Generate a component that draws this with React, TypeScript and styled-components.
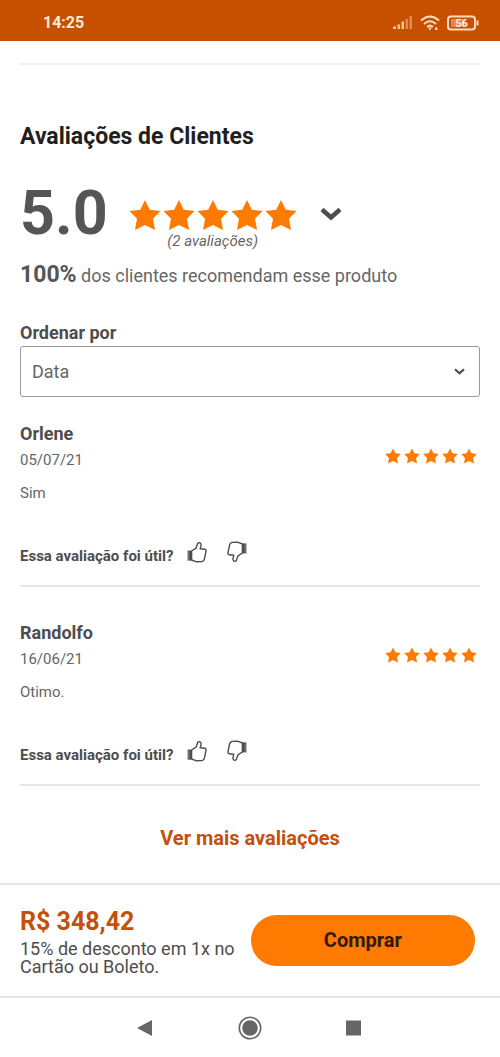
import React from "react";
import styled, { createGlobalStyle } from "styled-components";

const color = {
  brand: "#ff7a00",
  brandDark: "#c75000",
  price: "#c4500c",
  ink: "#1f1f1f",
  text: "#4d4d4d",
  muted: "#666666",
  line: "#e6e6e6",
};

const GlobalStyle = createGlobalStyle`
  *, *::before, *::after { box-sizing: border-box; }
  body {
    margin: 0;
    background: #fff;
    color: ${color.text};
    font-family: Roboto, "Liberation Sans", sans-serif;
  }
  h1, h2, h3, p { margin: 0; }
  button, select { font-family: inherit; }
  svg { display: block; flex: none; }
`;

const Screen = styled.div`
  min-height: 100vh;
  display: flex;
  flex-direction: column;
`;

const StatusBar = styled.header`
  display: flex;
  align-items: center;
  justify-content: space-between;
  height: 41px;
  padding: 4px 20px 0 43px;
  background: ${color.brandDark};
  color: #ffe9d6;
`;

const Clock = styled.time`
  font-size: 16px;
  line-height: 20px;
  font-weight: 700;
`;

const StatusIcons = styled.div`
  display: flex;
  align-items: center;
  gap: 7px;
`;

const Main = styled.main`
  flex: 1;
  padding: 22px 20px 32px;
`;

const Divider = styled.hr`
  height: 2px;
  margin: 0;
  border: 0;
  background: #efefef;
`;

const Title = styled.h1`
  margin-top: 58px;
  font-size: 23px;
  line-height: 28px;
  font-weight: 700;
  color: ${color.ink};
`;

const Summary = styled.section`
  display: flex;
  align-items: flex-start;
  margin-top: 32px;
`;

const Score = styled.strong`
  font-size: 61px;
  line-height: 60px;
  font-weight: 700;
  color: #555;
`;

const SummaryRating = styled.div`
  display: flex;
  flex-direction: column;
  align-items: center;
  gap: 1px;
  margin-left: 21px;
  padding-top: 16px;
`;

const Count = styled.span`
  font-size: 15px;
  line-height: 18px;
  font-style: italic;
  color: ${color.muted};
`;

const StarRow = styled.div<{ $gap: number }>`
  display: flex;
  gap: ${(p) => p.$gap}px;
`;

const IconButton = styled.button`
  display: flex;
  align-items: center;
  justify-content: center;
  padding: 0;
  border: 0;
  background: none;
  color: ${color.text};
  cursor: pointer;
`;

const ExpandButton = styled(IconButton)`
  height: 62px;
  margin-left: 23px;
`;

const Recommend = styled.p`
  margin-top: 12px;
  font-size: 18px;
  line-height: 26px;
  color: ${color.muted};

  strong {
    font-size: 23px;
    color: #555;
  }
`;

const SortLabel = styled.label`
  display: block;
  margin-top: 34px;
  font-size: 18px;
  line-height: 20px;
  font-weight: 700;
`;

const SelectBox = styled.div`
  position: relative;
  margin-top: 3px;

  svg {
    position: absolute;
    right: 15px;
    top: 22px;
    pointer-events: none;
  }
`;

const Select = styled.select`
  display: block;
  width: 100%;
  height: 51px;
  padding: 0 11px;
  border: 1px solid #999;
  border-radius: 3px;
  background: #fff;
  appearance: none;
  font-size: 18px;
  color: ${color.muted};
`;

const Review = styled.article<{ $first?: boolean }>`
  padding: ${(p) => (p.$first ? 26 : 35)}px 0 19px;
  border-bottom: 2px solid ${color.line};
`;

const ReviewHead = styled.div`
  display: flex;
  align-items: center;
  justify-content: space-between;
  padding-right: 3px;
`;

const Author = styled.h3`
  font-size: 18px;
  line-height: 22px;
  font-weight: 700;
`;

const ReviewDate = styled.time`
  display: block;
  margin-top: 4px;
  font-size: 15px;
  line-height: 22px;
  color: ${color.muted};
`;

const ReviewStars = styled.div`
  padding-top: 17px;
`;

const Comment = styled.p`
  margin-top: 12px;
  font-size: 15px;
  line-height: 20px;
  color: ${color.muted};
`;

const Helpful = styled.div`
  display: flex;
  align-items: flex-start;
  margin-top: 37px;
`;

const Question = styled.span`
  padding-top: 6px;
  margin-right: 14px;
  font-size: 15px;
  line-height: 20px;
  font-weight: 700;
`;

const Votes = styled.div`
  display: flex;
  gap: 20px;
  height: 24px;
`;

const MoreLink = styled.a`
  display: block;
  width: fit-content;
  margin: 40px auto 0;
  font-size: 20px;
  line-height: 24px;
  font-weight: 700;
  color: ${color.price};
  text-decoration: none;
`;

const BuyBar = styled.section`
  display: flex;
  align-items: center;
  justify-content: space-between;
  gap: 10px;
  padding: 19px 25px 20px 20px;
  border-top: 2px solid ${color.line};
  border-bottom: 2px solid ${color.line};
`;

const Offer = styled.div`
  flex: 1;
`;

const Price = styled.strong`
  display: block;
  font-size: 25px;
  line-height: 36px;
  font-weight: 700;
  color: ${color.price};
`;

const Terms = styled.p`
  font-size: 18px;
  line-height: 18px;
  color: ${color.text};
`;

const BuyButton = styled.button`
  width: 49.3%;
  height: 51px;
  border: 0;
  border-radius: 26px;
  background: ${color.brand};
  color: #33190a;
  font-size: 20px;
  font-weight: 700;
  cursor: pointer;
`;

const SystemNav = styled.nav`
  display: flex;
  align-items: center;
  justify-content: center;
  gap: 80px;
  height: 59px;

  button {
    width: 24px;
    height: 24px;
    color: #666;
  }
`;

function Star({ size }: { size: number }) {
  return (
    <svg width={size} height={size} viewBox="0 0 32 31" fill={color.brand} aria-hidden="true">
      <path d="M16 0.5 20.8 10.2 31.5 11.6 24 19.3 26 30.5 16 25.4 6 30.5 8 19.3 0.5 11.6 11.2 10.2Z" />
    </svg>
  );
}

function Stars({ size, gap }: { size: number; gap: number }) {
  return (
    <StarRow $gap={gap} role="img" aria-label="5 de 5 estrelas">
      {[1, 2, 3, 4, 5].map((n) => (
        <Star key={n} size={size} />
      ))}
    </StarRow>
  );
}

function Chevron({ width, stroke }: { width: number; stroke: number }) {
  return (
    <svg width={width} height={(width * 14) / 22} viewBox="0 0 22 14" fill="none" stroke={color.text} strokeWidth={stroke} aria-hidden="true">
      <path d="M2 2.5 11 10.5 20 2.5" />
    </svg>
  );
}

function Thumb({ down }: { down?: boolean }) {
  return (
    <svg width="20" height="24" viewBox="0 0 20 24" aria-hidden="true">
      <g transform={down ? "rotate(180 10 12)" : undefined}>
        <path
          d="M4.6 11 9 8.2 10.8 3.2Q13.4 2 14.2 4.6L13.2 8.8 17.8 9.2Q19.4 9.8 19 11.4L17.4 19.2Q16.8 21 15 21.6L9.6 21.8 4.6 20Z"
          fill="#fff"
          stroke={color.text}
          strokeWidth="1.4"
          strokeLinejoin="round"
        />
        <path d="M0.6 10.6H4.8V20.6H0.6Z" fill={color.text} />
        <path d="M1.8 11.6V19.6" stroke="#999" strokeWidth="0.8" />
      </g>
    </svg>
  );
}

const reviews = [
  { author: "Orlene", date: "05/07/21", iso: "2021-07-05", comment: "Sim" },
  { author: "Randolfo", date: "16/06/21", iso: "2021-06-16", comment: "Otimo." },
];

export default function App() {
  return (
    <Screen>
      <GlobalStyle />
      <StatusBar>
        <Clock>14:25</Clock>
        <StatusIcons>
          <svg width="20" height="14" viewBox="0 0 20 14" aria-hidden="true">
            <path d="M0 10.5h3V13H0zM4.5 8.5h2.5V13H4.5zM8.5 5.5H11V13H8.5z" fill="#ffc98c" />
            <path d="M12.5 3h2.5v10h-2.5zM16.5 0H19v13h-2.5z" fill="#ffe9d6" opacity="0.4" />
          </svg>
          <svg width="20" height="16" viewBox="0 0 20 16" fill="none" stroke="#ffdcbc" strokeWidth="2" aria-hidden="true">
            <path d="M1 5.5Q10-2.5 19 5.5M4 9Q10 3.5 16 9M7 12Q10 9.3 13 12" />
            <path d="M8.2 12.6h3.6L10 15.4ZM15 12.5h2.4v2.4H15z" fill="#ffdcbc" stroke="none" />
          </svg>
          <svg width="33" height="16" viewBox="0 0 33 16" aria-hidden="true">
            <rect x="1" y="1.5" width="27" height="13" rx="3" fill="none" stroke="#ffdcbc" strokeWidth="2" />
            <rect x="4" y="4" width="14" height="8" fill="#ffdcbc" opacity="0.4" />
            <path d="M29.5 5.5h2v5h-2z" fill="#ffdcbc" />
            <text x="14.5" y="12" textAnchor="middle" fontSize="11" fontWeight="700" fill="#fff0e2">
              56
            </text>
          </svg>
        </StatusIcons>
      </StatusBar>

      <Main>
        <Divider />
        <Title>Avaliações de Clientes</Title>

        <Summary>
          <Score>5.0</Score>
          <SummaryRating>
            <Stars size={32} gap={2} />
            <Count>(2 avaliações)</Count>
          </SummaryRating>
          <ExpandButton type="button" aria-label="Ver detalhes das notas">
            <Chevron width={22} stroke={4.5} />
          </ExpandButton>
        </Summary>

        <Recommend>
          <strong>100%</strong> dos clientes recomendam esse produto
        </Recommend>

        <SortLabel htmlFor="sort">Ordenar por</SortLabel>
        <SelectBox>
          <Select id="sort" defaultValue="data">
            <option value="data">Data</option>
          </Select>
          <Chevron width={11} stroke={4.5} />
        </SelectBox>

        {reviews.map((r, i) => (
          <Review key={r.author} $first={i === 0}>
            <ReviewHead>
              <div>
                <Author>{r.author}</Author>
                <ReviewDate dateTime={r.iso}>{r.date}</ReviewDate>
              </div>
              <ReviewStars>
                <Stars size={16} gap={3} />
              </ReviewStars>
            </ReviewHead>
            <Comment>{r.comment}</Comment>
            <Helpful>
              <Question>Essa avaliação foi útil?</Question>
              <Votes>
                <IconButton type="button" aria-label="Sim, foi útil">
                  <Thumb />
                </IconButton>
                <IconButton type="button" aria-label="Não foi útil">
                  <Thumb down />
                </IconButton>
              </Votes>
            </Helpful>
          </Review>
        ))}

        <MoreLink href="#avaliacoes">Ver mais avaliações</MoreLink>
      </Main>

      <BuyBar>
        <Offer>
          <Price>R$ 348,42</Price>
          <Terms>15% de desconto em 1x no Cartão ou Boleto.</Terms>
        </Offer>
        <BuyButton type="button">Comprar</BuyButton>
      </BuyBar>

      <SystemNav aria-label="Sistema">
        <IconButton type="button" aria-label="Voltar">
          <svg width="24" height="24" viewBox="0 0 24 24" fill="currentColor">
            <path d="M18 4V20L3 12Z" />
          </svg>
        </IconButton>
        <IconButton type="button" aria-label="Início">
          <svg width="24" height="24" viewBox="0 0 24 24" fill="currentColor">
            <circle cx="12" cy="12" r="10.7" fill="none" stroke="currentColor" strokeWidth="1.6" />
            <circle cx="12" cy="12" r="7.8" />
          </svg>
        </IconButton>
        <IconButton type="button" aria-label="Recentes">
          <svg width="24" height="24" viewBox="0 0 24 24" fill="currentColor">
            <path d="M4 4.5H19V19.5H4Z" />
          </svg>
        </IconButton>
      </SystemNav>
    </Screen>
  );
}
